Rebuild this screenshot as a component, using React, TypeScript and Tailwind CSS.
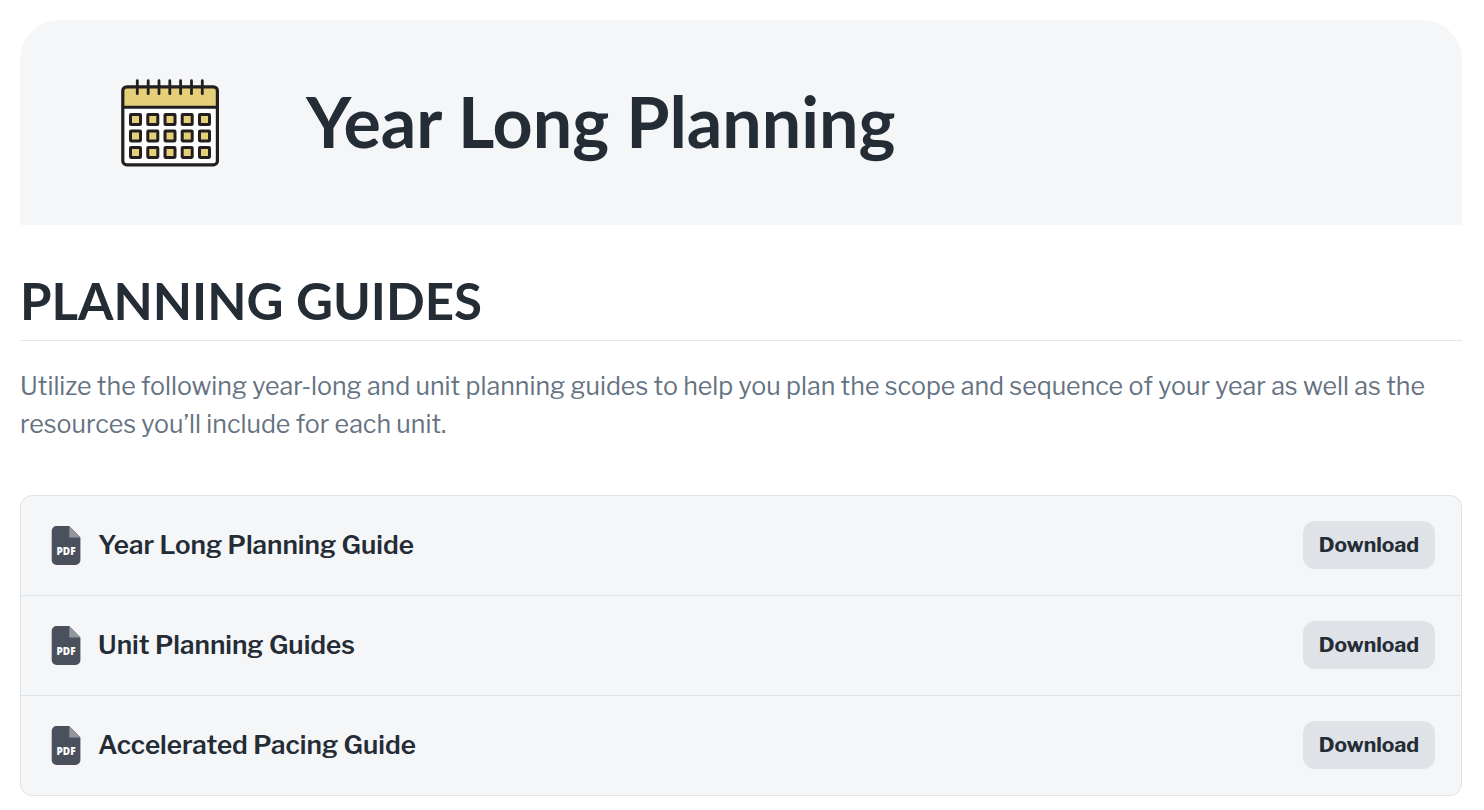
import React from "react";

interface Guide {
  id: string;
  title: string;
}

const guides: Guide[] = [
  { id: "year-long", title: "Year Long Planning Guide" },
  { id: "unit", title: "Unit Planning Guides" },
  { id: "accelerated", title: "Accelerated Pacing Guide" },
];

const RINGS = [17.3, 28.2, 39, 49.8, 60.6, 71.5, 82.3];
const DAY_COLUMNS = [10.5, 27.8, 45, 62.2, 79.5];
const DAY_ROWS = [36.5, 52.9, 69.4];

const CalendarIcon = (): React.ReactElement => (
  <svg viewBox="0 0 100 90" className="h-[90px] w-[100px] shrink-0" fill="none" aria-hidden="true">
    <rect x="2.8" y="8.8" width="94.6" height="78.1" rx="4" fill="#fff" />
    <path d="M2.8 29.3V12.8a4 4 0 0 1 4-4h86.6a4 4 0 0 1 4 4v16.5z" fill="#e5cf78" />
    <g stroke="#231f20" strokeWidth="3">
      <rect x="2.8" y="8.8" width="94.6" height="78.1" rx="4" strokeWidth="3.2" />
      <path d="M2.8 29.3h94.6" />
      {RINGS.map((x) => (
        <path key={x} d={`M${x} 2.7v13`} strokeLinecap="round" strokeWidth="2.8" />
      ))}
      {DAY_ROWS.map((y) =>
        DAY_COLUMNS.map((x) => (
          <rect key={`${x}-${y}`} x={x} y={y} width="10" height="10" rx="0.6" fill="#e5cf78" />
        ))
      )}
    </g>
  </svg>
);

const PdfIcon = (): React.ReactElement => (
  <svg viewBox="0 0 30 39" className="h-[39px] w-[30px] shrink-0" aria-hidden="true">
    <path
      d="M5.5 0h12.8l11.1 11.4v22.8a4.8 4.8 0 0 1-4.8 4.8H5.5a4.8 4.8 0 0 1-4.8-4.8V4.8A4.8 4.8 0 0 1 5.5 0z"
      fill="#4a505c"
    />
    <path d="M18.3 0l11.1 11.4H18.3z" fill="#92969d" />
    <text
      x="15"
      y="28.7"
      textAnchor="middle"
      fill="#fff"
      className="font-['Open_Sans',sans-serif] text-[10px] font-extrabold"
    >
      PDF
    </text>
  </svg>
);

const GuideRow = ({ guide }: { guide: Guide }): React.ReactElement => (
  <li className="flex items-center gap-[17px] pt-[25px] pr-[26px] pb-[26px] pl-[30px]">
    <PdfIcon />
    <span id={guide.id} className="flex-1 text-[26px] leading-[38px] font-semibold">
      {guide.title}
    </span>
    <button
      type="button"
      aria-describedby={guide.id}
      className="h-12 cursor-pointer rounded-xl bg-[#dfe2e7] px-4 text-[21px] leading-8 font-bold"
    >
      Download
    </button>
  </li>
);

export default function App(): React.ReactElement {
  return (
    <main className="bg-white py-5 pr-[22px] pl-5 font-['Libre_Franklin','Open_Sans',sans-serif] text-[#242c35]">
      <header className="flex items-center gap-[86px] rounded-t-[40px] bg-[#f5f6f8] px-[100px] pt-[58px] pb-[57px]">
        <CalendarIcon />
        <h1 className="-mt-1 font-['Brandon_Grotesque','Lato',sans-serif] text-[70px] leading-[86px] font-bold">
          Year Long Planning
        </h1>
      </header>

      <h2 className="mt-[46px] border-b border-[#e4e6e9] pb-2.5 font-['Brandon_Grotesque','Lato',sans-serif] text-[51px] leading-[59px] font-bold uppercase">
        Planning Guides
      </h2>

      <p className="mt-[26px] text-[25px] leading-[38px] text-[#657382]">
        Utilize the following year-long and unit planning guides to help you plan the scope and sequence of your year as
        well as the resources you’ll include for each unit.
      </p>

      <ul className="mt-[52px] divide-y divide-[#dfe2e6] rounded-xl border border-[#dfe2e6] bg-[#f5f6f8]">
        {guides.map((guide) => (
          <GuideRow key={guide.id} guide={guide} />
        ))}
      </ul>
    </main>
  );
}
